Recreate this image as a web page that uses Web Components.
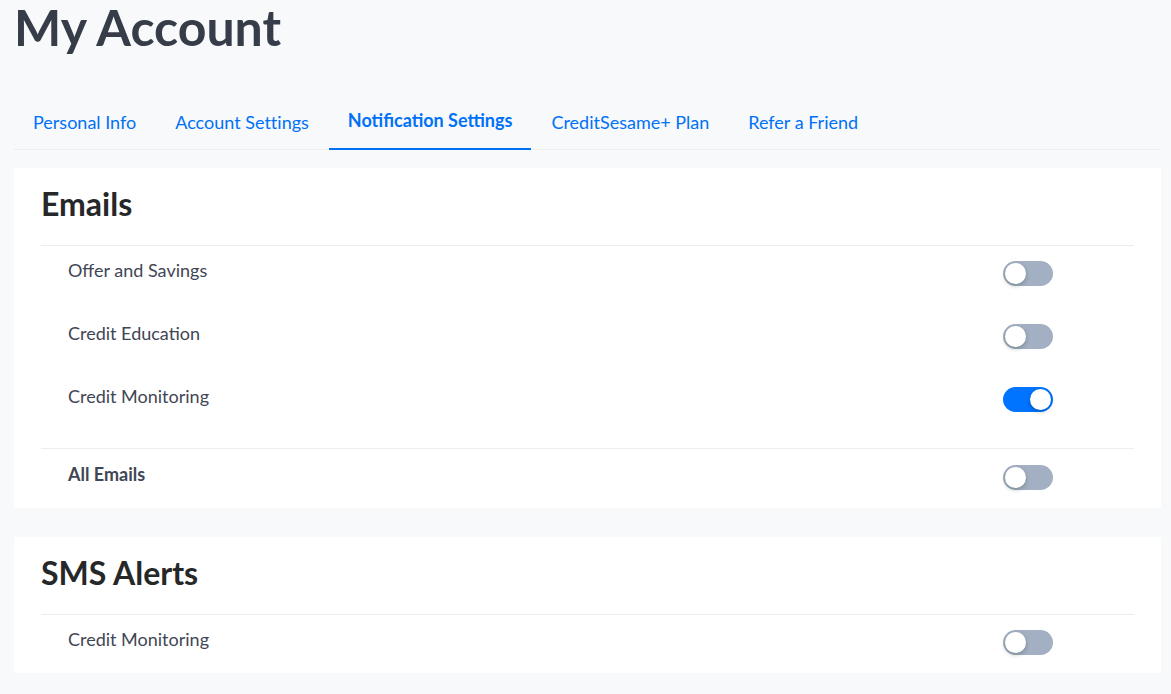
<!DOCTYPE html>
<html lang="en">
<head>
<meta charset="utf-8">
<meta name="viewport" content="width=device-width, initial-scale=1">
<title>My Account</title>
<style>
  body {
    margin: 0;
    background: #f8f9fb;
    color: #3f4654;
    font: 18px/26px Lato, "Liberation Sans", sans-serif;
  }
</style>
</head>
<body>
<account-page>
  <span slot="title">My Account</span>
  <account-tabs slot="tabs">
    <account-tab>Personal Info</account-tab>
    <account-tab>Account Settings</account-tab>
    <account-tab current>Notification Settings</account-tab>
    <account-tab>CreditSesame+ Plan</account-tab>
    <account-tab>Refer a Friend</account-tab>
  </account-tabs>
  <settings-card heading="Emails">
    <toggle-row label="Offer and Savings"></toggle-row>
    <toggle-row label="Credit Education"></toggle-row>
    <toggle-row label="Credit Monitoring" on></toggle-row>
    <toggle-row slot="summary" label="All Emails" strong></toggle-row>
  </settings-card>
  <settings-card heading="SMS Alerts">
    <toggle-row label="Credit Monitoring"></toggle-row>
  </settings-card>
</account-page>

<script>
  class AccountPage extends HTMLElement {
    constructor() {
      super();
      this.attachShadow({ mode: "open" }).innerHTML = `
        <style>
          :host { display: block; padding: 0 10px 20px 14px; }
          h1 { margin: 0; font-size: 50px; line-height: 54px; font-weight: 700; color: #363d49; }
          header { display: flex; flex-direction: column; gap: 42px; }
          main { display: flex; flex-direction: column; gap: 29px; margin-top: 18px; }
        </style>
        <header>
          <h1><slot name="title"></slot></h1>
          <slot name="tabs"></slot>
        </header>
        <main><slot></slot></main>`;
    }
  }

  class AccountTabs extends HTMLElement {
    constructor() {
      super();
      this.attachShadow({ mode: "open" }).innerHTML = `
        <style>
          :host { display: block; }
          nav { display: flex; gap: 1px; box-shadow: inset 0 -1px #eceef0; }
        </style>
        <nav aria-label="Account"><slot></slot></nav>`;
    }
  }

  class AccountTab extends HTMLElement {
    connectedCallback() {
      if (this.shadowRoot) return;
      const current = this.hasAttribute("current");
      this.attachShadow({ mode: "open" }).innerHTML = `
        <style>
          :host { display: block; white-space: nowrap; }
          a { display: block; padding: 13px 19px 15px; color: #0071f7; text-decoration: none;
              font-variant-ligatures: none; }
          a[aria-current] { padding: 11px 19px 15px; border-bottom: 2px solid #0071f7; font-weight: 700;
              font-variant-ligatures: normal; }
        </style>
        <a href="#" ${current ? 'aria-current="page"' : ""}><slot></slot></a>`;
    }
  }

  class SettingsCard extends HTMLElement {
    connectedCallback() {
      if (this.shadowRoot) return;
      const summary = this.querySelector('[slot="summary"]');
      this.attachShadow({ mode: "open" }).innerHTML = `
        <style>
          :host { display: block; background: #fff; padding: 0 27px; }
          h2 { margin: 0; padding: 16px 0 21px; font-size: 32px; line-height: 40px; font-weight: 700;
               color: #262728; border-bottom: 1px solid #ebedef; }
          .rows { display: flex; flex-direction: column; gap: 5px; }
          .summary { margin-top: 18px; padding-top: 1px; border-top: 1px solid #ebeef2; }
        </style>
        <section aria-labelledby="heading">
          <h2 id="heading"></h2>
          <div class="rows"><slot></slot></div>
          ${summary ? '<div class="summary"><slot name="summary"></slot></div>' : ""}
        </section>`;
      this.shadowRoot.querySelector("h2").textContent = this.getAttribute("heading");
    }
  }

  class ToggleRow extends HTMLElement {
    connectedCallback() {
      if (this.shadowRoot) return;
      this.attachShadow({ mode: "open" }).innerHTML = `
        <style>
          :host { display: grid; grid-template-columns: 1fr 131px; align-items: start;
                  box-sizing: border-box; padding: 11px 0 15px 27px; min-height: 58px; }
          :host([strong]) { font-weight: 700; }
          input { appearance: none; margin: 4px 0 0; width: 50px; height: 25px; border-radius: 13px;
                  background: #a3afc2; padding: 2px; box-sizing: border-box; display: flex; }
          input::before { content: ""; width: 21px; height: 21px; border-radius: 50%; background: #fff;
                  box-shadow: 0 2px 4px rgba(0, 35, 11, .25); }
          input:checked { background: #0073ff; justify-content: flex-end; }
        </style>
        <label for="toggle"></label>
        <input id="toggle" type="checkbox" role="switch" ${this.hasAttribute("on") ? "checked" : ""}>`;
      this.shadowRoot.querySelector("label").textContent = this.getAttribute("label");
    }
  }

  customElements.define("account-page", AccountPage);
  customElements.define("account-tabs", AccountTabs);
  customElements.define("account-tab", AccountTab);
  customElements.define("settings-card", SettingsCard);
  customElements.define("toggle-row", ToggleRow);
</script>
</body>
</html>
